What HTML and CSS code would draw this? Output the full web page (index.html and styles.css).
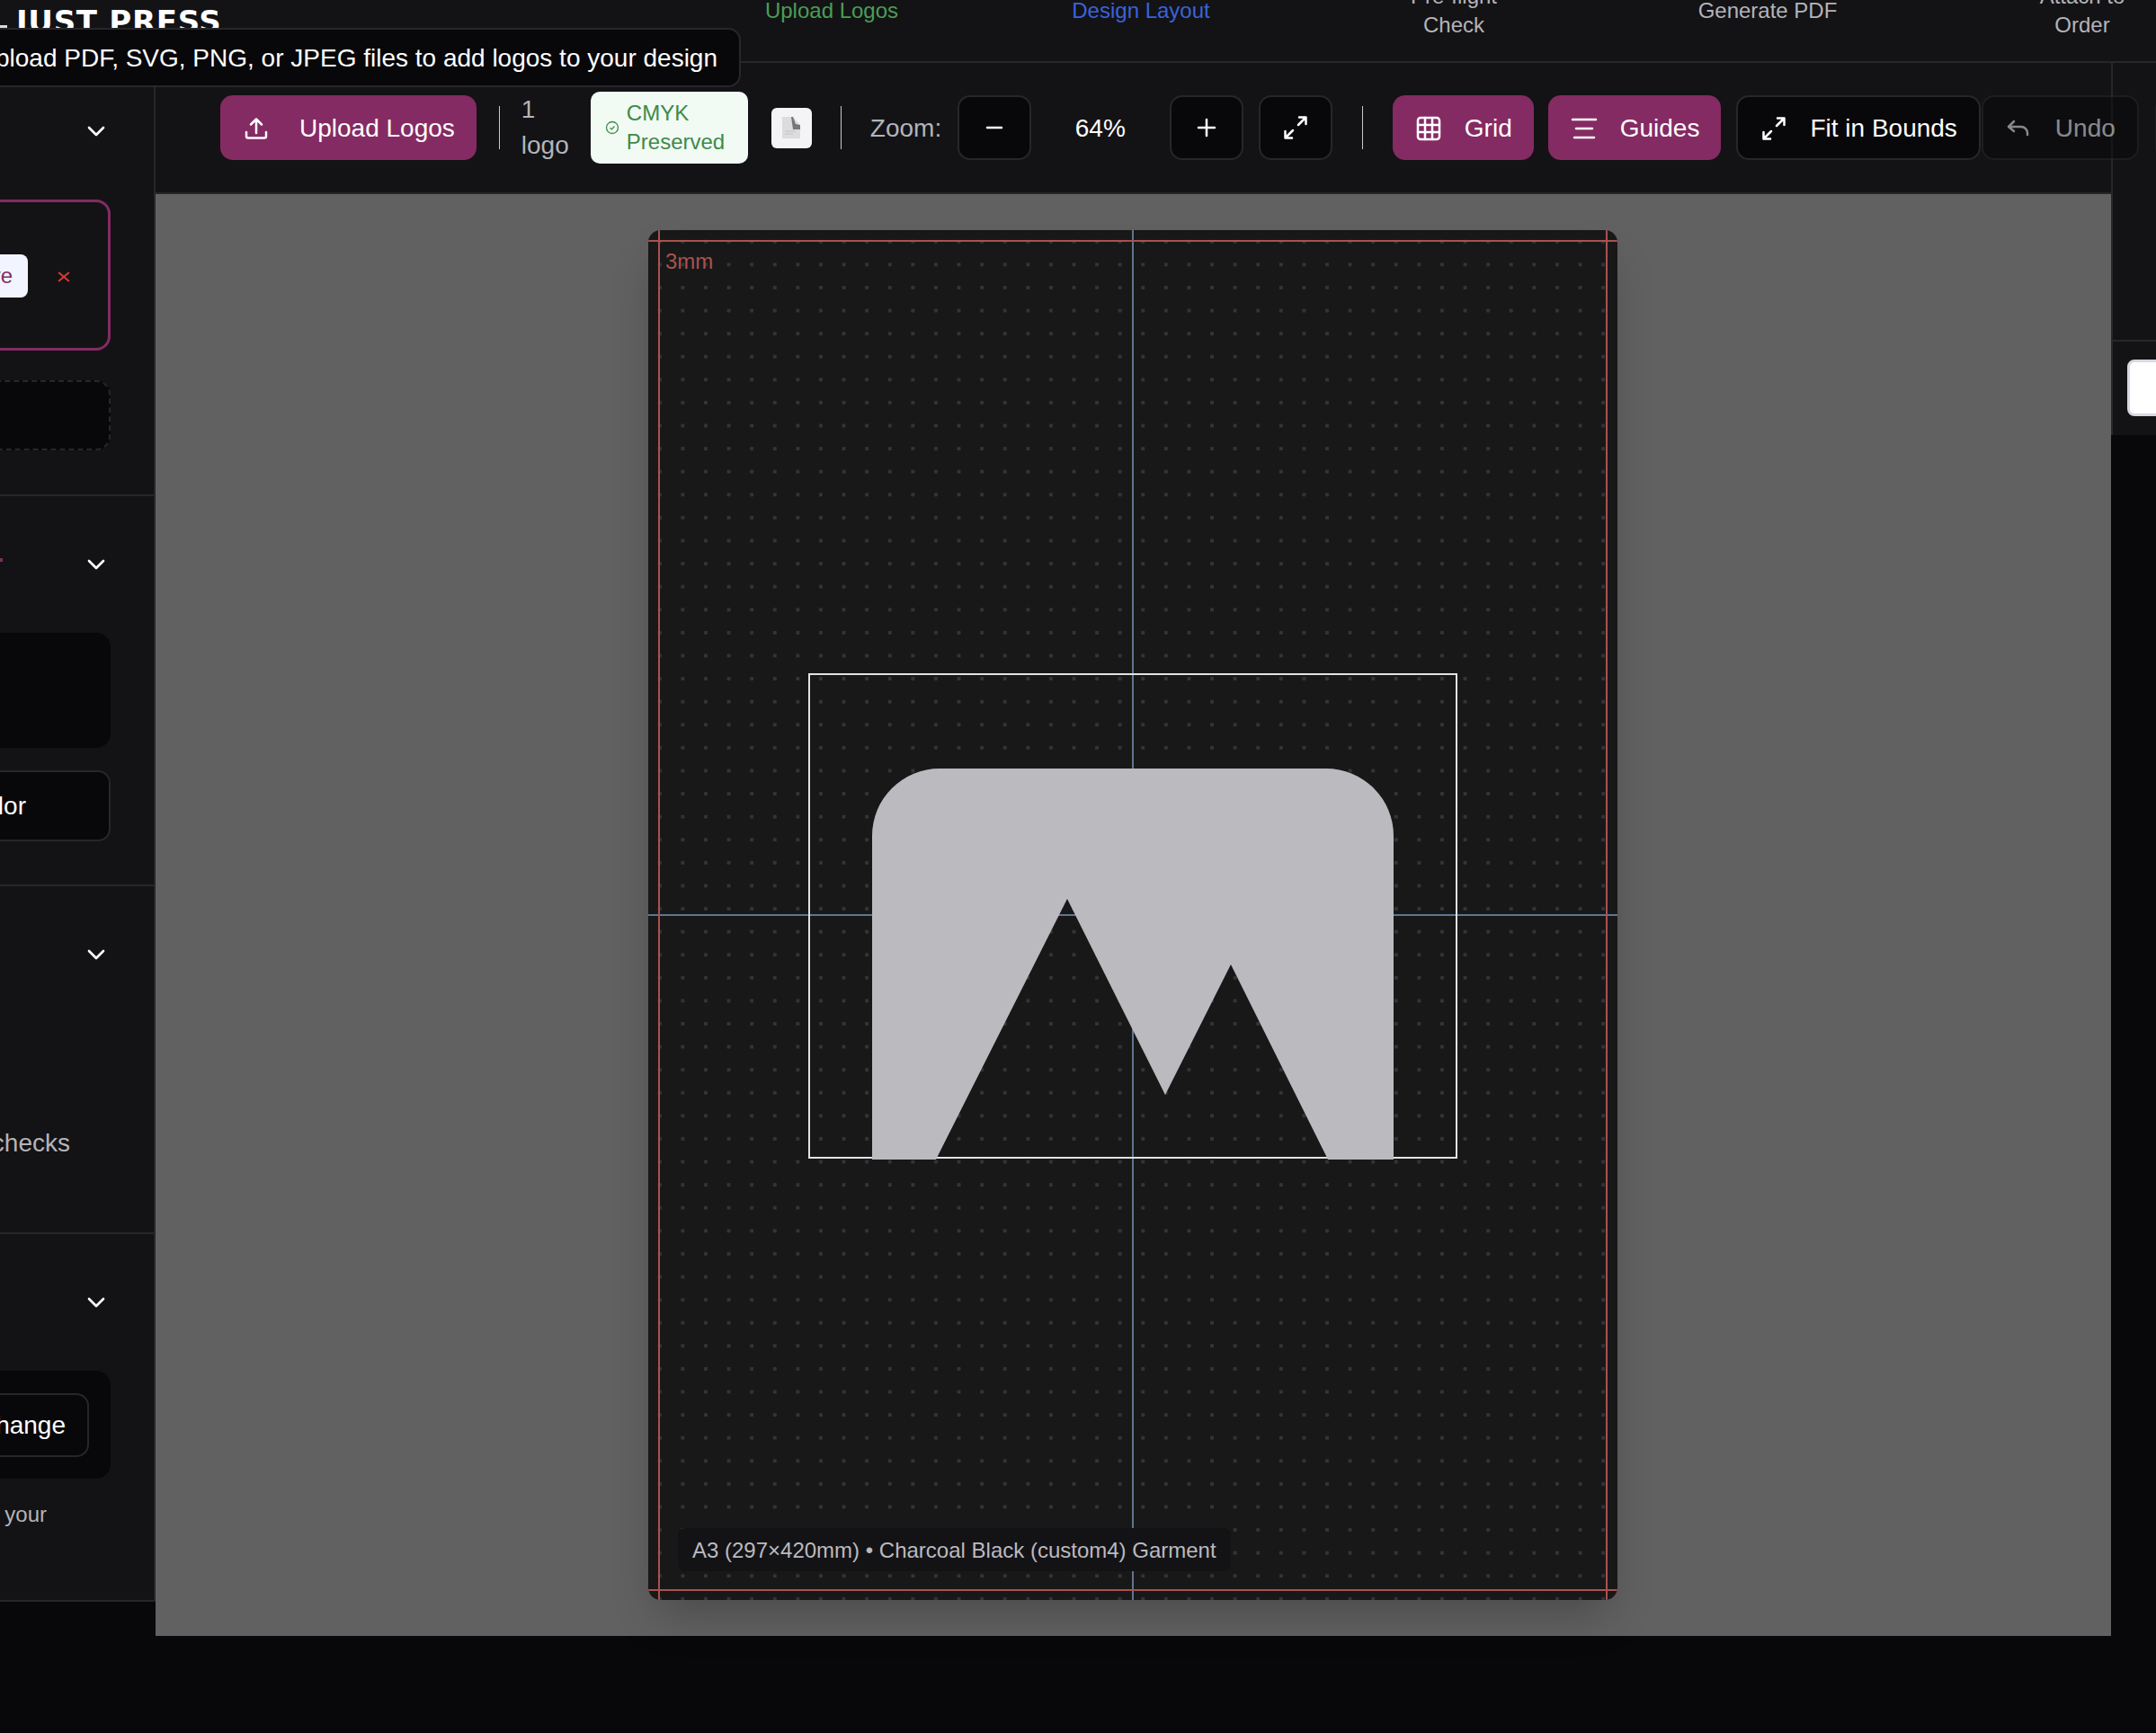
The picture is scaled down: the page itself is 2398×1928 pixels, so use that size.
FILE: index.html
```html
<!DOCTYPE html>
<html lang="en">
<head>
    <meta charset="UTF-8" />
    <meta name="viewport" content="width=device-width, initial-scale=1" />
    <title>Just Press - Design Layout</title>
    <link rel="stylesheet" href="styles.css">
</head>
<body>
    <header class="topbar">
        <div class="brand"><span class="brand-mark"></span><span class="brand-name">JUST PRESS</span></div>
        <nav class="steps">
            <span class="step step-done">Upload Logos</span>
            <span class="step step-current">Design Layout</span>
            <span class="step">Pre-flight<br>Check</span>
            <span class="step">Generate PDF</span>
            <span class="step">Attach to<br>Order</span>
        </nav>
    </header>

    <div class="tooltip">Upload PDF, SVG, PNG, or JPEG files to add logos to your design</div>

    <main class="workspace">
        <aside class="sidebar">
            <section class="side-section side-logos">
                <div class="side-head">
                    <svg class="chevron" viewBox="0 0 24 24"><path d="M6 9l6 6 6-6"/></svg>
                </div>
                <div class="logo-card">
                    <button class="active-btn">Active</button>
                    <svg class="remove" viewBox="0 0 24 24"><path d="M5 6l14 12M19 6L5 18"/></svg>
                </div>
                <div class="drop-zone"></div>
            </section>

            <section class="side-section side-color">
                <div class="side-head">
                    <span class="req-mark"></span>
                    <svg class="chevron" viewBox="0 0 24 24"><path d="M6 9l6 6 6-6"/></svg>
                </div>
                <div class="dark-box swatches"></div>
                <button class="side-btn color-btn">Color</button>
            </section>

            <section class="side-section side-checks">
                <div class="side-head">
                    <svg class="chevron" viewBox="0 0 24 24"><path d="M6 9l6 6 6-6"/></svg>
                </div>
                <p class="checks-text">checks</p>
            </section>

            <section class="side-section side-project">
                <div class="side-head">
                    <svg class="chevron" viewBox="0 0 24 24"><path d="M6 9l6 6 6-6"/></svg>
                </div>
                <div class="dark-box change-box">
                    <button class="side-btn change-btn">Change</button>
                </div>
                <p class="note-text">your</p>
            </section>
        </aside>

        <div class="center">
            <div class="toolbar">
                <button class="btn btn-pink btn-upload">
                    <svg class="icon" viewBox="0 0 32 32"><path d="M16 21V6M10 11.500l6-6 6 6M5 20v4.500a2 2 0 0 0 2 2h18a2 2 0 0 0 2-2V20"/></svg>
                    Upload Logos
                </button>
                <span class="divider"></span>
                <span class="logo-count">1<br>logo</span>
                <div class="cmyk">
                    <svg class="cmyk-icon" viewBox="0 0 16 16"><circle cx="8" cy="8" r="6.500"/><path d="M5.500 8.200l1.800 1.700 3.200-3.400"/></svg>
                    <span>CMYK<br>Preserved</span>
                </div>
                <div class="thumb">
                    <svg viewBox="0 0 22 26" width="22" height="26"><path d="M1 1h12l8 9v15H1z" fill="#dcdcde"/><path d="M11 1h2l3 8 5 1v5h-8z" fill="#77777a"/><path d="M4 17h12M4 20h9" stroke="#c4c4c6" stroke-width="1"/></svg>
                </div>
                <span class="divider divider-b"></span>
                <span class="zoom-label">Zoom:</span>
                <button class="btn btn-dark btn-square">
                    <svg class="icon" viewBox="0 0 32 32"><path d="M8 16h16"/></svg>
                </button>
                <span class="zoom-value">64%</span>
                <button class="btn btn-dark btn-square">
                    <svg class="icon" viewBox="0 0 32 32"><path d="M16 7v18M7 16h18"/></svg>
                </button>
                <button class="btn btn-dark btn-square btn-expand">
                    <svg class="icon" viewBox="0 0 32 32"><path d="M19 13L27 5M20 4.500h7.500V12M13 19l-8 8M4.500 20v7.500H12"/></svg>
                </button>
                <span class="divider divider-c"></span>
                <button class="btn btn-pink btn-grid">
                    <svg class="icon" viewBox="0 0 32 32"><rect x="4" y="4" width="24" height="24" rx="3"/><path d="M12 4v24M20 4v24M4 12h24M4 20h24"/></svg>
                    Grid
                </button>
                <button class="btn btn-pink btn-guides">
                    <svg class="icon" viewBox="0 0 32 32"><path d="M3 6h26M7 16h18M5 26h22"/></svg>
                    Guides
                </button>
                <button class="btn btn-dark btn-fit">
                    <svg class="icon" viewBox="0 0 32 32"><path d="M19 13L27 5M20 4.500h7.500V12M13 19l-8 8M4.500 20v7.500H12"/></svg>
                    Fit in Bounds
                </button>
                <button class="btn btn-dark btn-off btn-undo">
                    <svg class="icon" viewBox="0 0 32 32"><path d="M10 8l-6 6 6 5M4 14h14a7 7 0 0 1 7 7v2"/></svg>
                    Undo
                </button>
                <button class="btn btn-dark btn-off btn-redo">Redo</button>
            </div>

            <div class="canvas-area">
                <div class="garment">
                    <div class="guide guide-v"></div>
                    <div class="guide guide-h"></div>
                    <div class="bleed bleed-x"></div>
                    <div class="bleed bleed-y"></div>
                    <span class="bleed-label">3mm</span>
                    <div class="logo-box"></div>
                    <svg class="placed-logo" viewBox="0 0 580 435" width="580" height="435">
                        <path d="M0 435V75A75 75 0 0 1 75 0H505A75 75 0 0 1 580 75V435H507L399 218L326 363L217 145L71 435Z" fill="#bbbabf"/>
                    </svg>
                    <div class="garment-label">A3 (297×420mm) • Charcoal Black (custom4) Garment</div>
                </div>
            </div>
        </div>

        <aside class="right-panel">
            <div class="right-top"></div>
            <div class="right-bottom"><div class="white-box"></div></div>
        </aside>
    </main>
</body>
</html>
```

FILE: styles.css
```css
* {
    box-sizing: border-box;
}
html, body {
    margin: 0;
    height: 100%;
}
body {
    position: relative;
    width: 2398px;
    height: 1928px;
    overflow: hidden;
    background-color: #08080b;
    color: #fff;
    font-family: "Liberation Sans", Arial, sans-serif;
    font-size: 28px;
}
button {
    font-family: inherit;
    font-size: 28px;
    color: inherit;
    cursor: pointer;
}
svg {
    flex: none;
}

/* top bar */
.topbar {
    display: flex;
    height: 70px;
    background: #131316;
    border-bottom: 2px solid #27272a;
}
.brand {
    flex: none;
    display: flex;
    align-items: flex-start;
    width: 751px;
    padding-top: 4px;
}
.brand-mark {
    width: 8px;
    height: 4px;
    margin-top: 24px;
    margin-right: 10px;
    background: #d8d8d8;
}
.brand-name {
    font-family: "DejaVu Sans", sans-serif;
    font-weight: 700;
    font-size: 34px;
    line-height: 40px;
    letter-spacing: 0.7px;
    white-space: nowrap;
}
.steps {
    flex: none;
    display: grid;
    grid-template-columns: 348px 340px 356px 342px 358px;
    grid-template-rows: 24px;
    align-items: center;
    height: 24px;
}
.step {
    font-size: 24px;
    line-height: 32px;
    text-align: center;
    color: #b4b4b8;
}
.step-done {
    color: #4a9e55;
}
.step-current {
    color: #3b62d9;
}

.tooltip {
    position: absolute;
    top: 31px;
    right: 1574px;
    height: 66px;
    padding: 0 24px;
    line-height: 64px;
    white-space: nowrap;
    background: #08080b;
    border: 2px solid #27272a;
    border-radius: 14px;
    z-index: 5;
}

/* layout */
.workspace {
    display: flex;
    align-items: flex-start;
}

/* sidebar, wider than what fits: only its right end shows */
.sidebar {
    flex: none;
    display: flex;
    flex-direction: column;
    align-items: flex-end;
    width: 173px;
    height: 1712px;
    overflow: hidden;
    background: #131316;
    border-right: 2px solid #27272a;
}
.side-section {
    flex: none;
    width: 600px;
    padding-right: 48px;
    border-bottom: 2px solid #27272a;
    display: flex;
    flex-direction: column;
    align-items: flex-end;
}
.side-logos {
    height: 482px;
}
.side-color {
    height: 434px;
}
.side-checks {
    height: 387px;
}
.side-project {
    height: 409px;
}
.side-head {
    display: flex;
    align-items: center;
    justify-content: flex-end;
    width: 100%;
    height: 152px;
}
.chevron {
    width: 32px;
    height: 32px;
    fill: none;
    stroke: #fff;
    stroke-width: 2;
    stroke-linecap: round;
    stroke-linejoin: round;
}
.req-mark {
    width: 3px;
    height: 4px;
    margin-right: 88px;
    margin-bottom: 10px;
    background: #852b63;
}
.logo-card {
    display: flex;
    align-items: center;
    justify-content: flex-end;
    width: 100%;
    height: 168px;
    padding-right: 39px;
    padding-top: 2px;
    border: 3px solid #852b63;
    border-radius: 16px;
}
.active-btn {
    height: 48px;
    padding: 0 17px;
    font-size: 24px;
    color: #852b63;
    background: #f2f4ff;
    border: none;
    border-radius: 8px;
}
.remove {
    width: 20px;
    height: 20px;
    margin-left: 30px;
    margin-top: 2px;
    fill: none;
    stroke: #cf3d33;
    stroke-width: 2.500;
}
.drop-zone {
    width: 100%;
    height: 78px;
    margin-top: 33px;
    background: #08080b;
    border: 2px dashed #27272a;
    border-radius: 16px;
}
.dark-box {
    width: 100%;
    background: #08080b;
    border-radius: 16px;
}
.swatches {
    height: 128px;
}
.side-btn {
    text-align: right;
    background: #08080b;
    border: 2px solid #27272a;
    border-radius: 14px;
}
.color-btn {
    width: 100%;
    height: 79px;
    margin-top: 25px;
    padding-top: 2px;
    padding-right: 92px;
}
.checks-text {
    margin: 118px 45px 0 0;
    color: #b4b4b8;
}
.change-box {
    display: flex;
    justify-content: flex-end;
    align-items: center;
    height: 120px;
    padding-right: 24px;
}
.change-btn {
    width: 300px;
    height: 71px;
    padding-top: 2px;
    padding-right: 24px;
}
.note-text {
    margin: 26px 71px 0 0;
    font-size: 24px;
    color: #b4b4b8;
}

/* toolbar and canvas */
.center {
    flex: none;
    width: 2175px;
}
.toolbar {
    position: relative;
    z-index: 2;
    display: flex;
    align-items: center;
    height: 146px;
    padding-left: 72px;
    background: #131316;
    border-bottom: 2px solid #27272a;
    white-space: nowrap;
}
.toolbar > * {
    flex: none;
}
.btn {
    display: flex;
    align-items: center;
    gap: 24px;
    height: 72px;
    padding: 2px 24px 0;
    border-radius: 14px;
}
.btn-pink {
    background: #852b63;
    border: none;
    color: #fff;
}
.btn-dark {
    background: #08080b;
    border: 2px solid #27272a;
}
.btn-off {
    opacity: 0.5;
}
.btn-square {
    justify-content: center;
    width: 82px;
    padding: 0;
}
.icon {
    width: 32px;
    height: 32px;
    fill: none;
    stroke: currentColor;
    stroke-width: 2.500;
    stroke-linecap: round;
    stroke-linejoin: round;
}
.btn-upload {
    gap: 32px;
}
.btn-expand {
    margin-left: 17px;
}
.btn-grid {
    margin-left: 33px;
}
.btn-guides {
    margin-left: 16px;
}
.btn-fit {
    margin-left: 17px;
}
.btn-undo {
    margin-left: 1px;
}
.btn-redo {
    margin-left: 18px;
}
.divider {
    width: 1px;
    height: 48px;
    margin: 0 24px 0 25px;
    background: #c8c8cc;
}
.divider-b {
    margin: 0 32px;
}
.divider-c {
    margin: 0 0 0 33px;
}
.logo-count {
    width: 54px;
    line-height: 40px;
    color: #b4b4b8;
}
.cmyk {
    display: flex;
    align-items: center;
    gap: 8px;
    width: 175px;
    height: 80px;
    margin-left: 23px;
    padding-left: 16px;
    font-size: 24px;
    line-height: 32px;
    color: #3f8a4a;
    background: #f1faf3;
    border-radius: 10px;
}
.cmyk-icon {
    width: 16px;
    height: 16px;
    fill: none;
    stroke: #3f8a4a;
    stroke-width: 1.300;
}
.thumb {
    display: flex;
    align-items: center;
    justify-content: center;
    width: 45px;
    height: 45px;
    margin-left: 26px;
    background: #f4f4f6;
    border-radius: 6px;
}
.zoom-label {
    width: 97px;
    padding-top: 2px;
    color: #b4b4b8;
}
.zoom-value {
    width: 154px;
    padding-top: 2px;
    text-align: center;
}
.canvas-area {
    display: flex;
    justify-content: center;
    height: 1604px;
    padding: 40px 1px 0 0;
    background: #616161;
}

/* garment: a free canvas, its items are placed on it */
.garment {
    position: relative;
    flex: none;
    width: 1078px;
    height: 1524px;
    overflow: hidden;
    border-radius: 14px;
    background-color: #181818;
    background-image: radial-gradient(circle, #33343a 2px, transparent 2.500px);
    background-size: 25.6px 25.6px;
    box-shadow: 0 25px 50px -12px rgba(0, 0, 0, 0.25);
}
.guide {
    position: absolute;
    background: #5f7590;
}
.guide-v {
    top: 0;
    bottom: 0;
    left: 538px;
    width: 2px;
}
.guide-h {
    left: 0;
    right: 0;
    top: 761px;
    height: 2px;
}
.bleed {
    position: absolute;
    border: 0 solid #a9524f;
}
.bleed-x {
    top: 0;
    bottom: 0;
    left: 11px;
    right: 11px;
    border-width: 0 2px;
}
.bleed-y {
    left: 0;
    right: 0;
    top: 11px;
    bottom: 10px;
    border-width: 2px 0;
}
.bleed-label {
    position: absolute;
    left: 19px;
    top: 21px;
    font-size: 24px;
    line-height: 28px;
    color: #a9524f;
}
.logo-box {
    position: absolute;
    left: 178px;
    top: 493px;
    width: 722px;
    height: 540px;
    border: 2px solid #e2e2e6;
}
.placed-logo {
    position: absolute;
    left: 249px;
    top: 599px;
}
.garment-label {
    position: absolute;
    left: 33px;
    top: 1444px;
    height: 48px;
    padding: 0 16px;
    font-size: 24px;
    line-height: 50px;
    white-space: nowrap;
    color: #bbbabf;
    background: #131316;
    border-radius: 8px;
}

/* right panel, cut by the window */
.right-panel {
    flex: none;
    width: 50px;
    height: 414px;
    background: #131316;
    border-left: 2px solid #27272a;
}
.right-top {
    height: 310px;
    border-bottom: 2px solid #27272a;
}
.right-bottom {
    padding: 20px 0 0 16px;
}
.white-box {
    width: 60px;
    height: 63px;
    background: #fff;
    border: 3px solid #d8d8e0;
    border-radius: 8px;
}
```
